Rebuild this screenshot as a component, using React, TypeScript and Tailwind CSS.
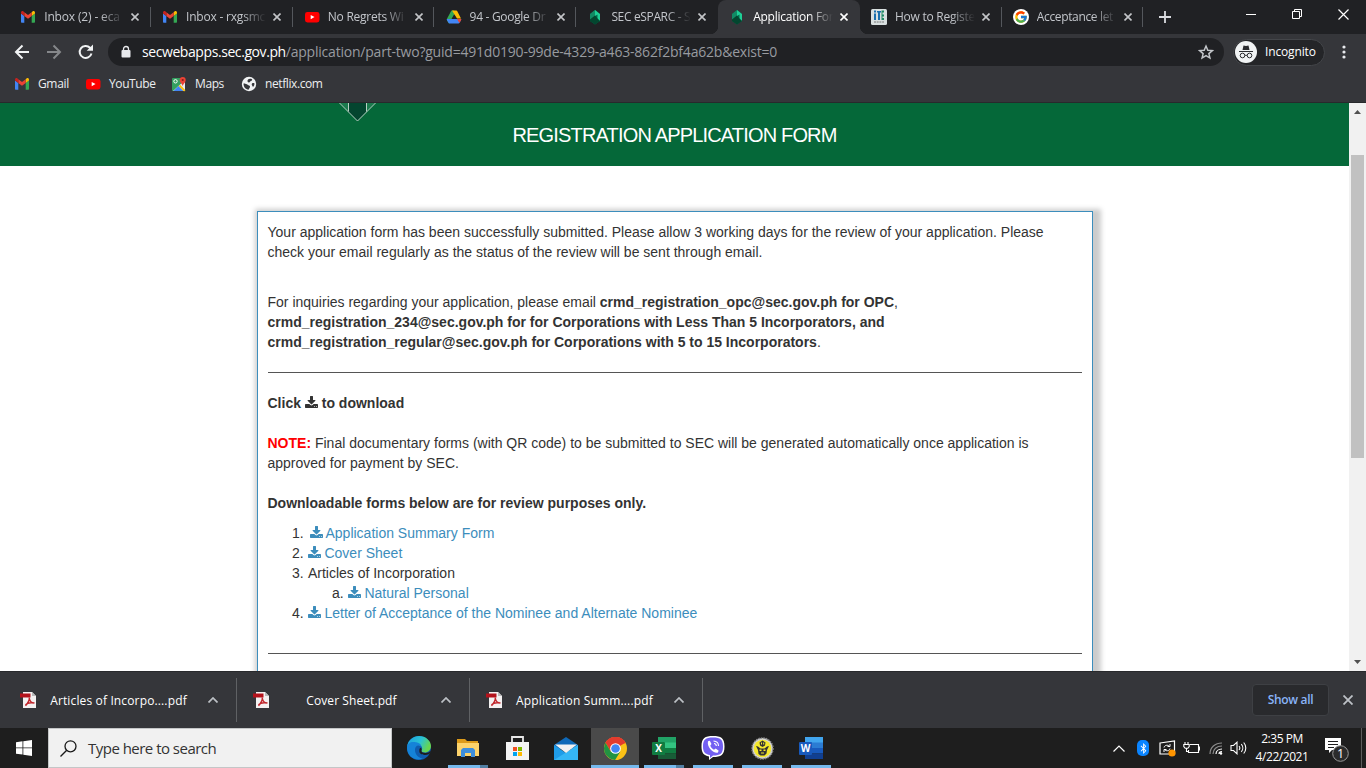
import type { ReactNode } from "react";
import { FcGoogle } from "react-icons/fc";
import { FaBluetoothB } from "react-icons/fa";

const UI = "font-['Open_Sans','Noto_Sans',sans-serif]";

function Gmail({ s = 16 }: { s?: number }) {
  return (
    <svg width={s} height={s} viewBox="0 0 16 16" className="shrink-0">
      <path d="M1 4.500v8.200c0 .6.4 1 1 1h2.300V7L1 4.500z" fill="#4285f4" />
      <path d="M15 4.500v8.200c0 .6-.4 1-1 1h-2.300V7L15 4.500z" fill="#34a853" />
      <path d="M11.700 3.200V7L15 4.500V3.600c0-1.400-1.500-2-2.500-1.200z" fill="#fbbc04" />
      <path d="M4.300 7V3.200L8 6l3.700-2.800V7L8 9.800z" fill="#ea4335" />
      <path d="M1 3.600v.9L4.300 7V3.200l-.8-.8C2.500 1.600 1 2.200 1 3.600z" fill="#c5221f" />
    </svg>
  );
}
function YouTube() {
  return (
    <svg width="16" height="16" viewBox="0 0 16 16" className="shrink-0">
      <rect x="1" y="3" width="14.500" height="10.500" rx="2.400" fill="#f00" />
      <path d="M6.700 5.900v4.400l3.800-2.200z" fill="#fff" />
    </svg>
  );
}
function Drive() {
  return (
    <svg width="16" height="16" viewBox="0 0 16 16" className="shrink-0">
      <path d="M5.500 1.500h2.600L9.500 4 5.300 11 3.300 14.500c-.4-.1-.7-.3-.9-.7L1 11.200c-.2-.5-.2-1 0-1.400L5 2.200z" fill="#34a853" />
      <path d="M6 1.500h4.200c.5 0 .9.300 1.100.7L15 9.500H11z" fill="#fbbc04" />
      <path d="M.8 10h14.400c0 .5 0 .8-.2 1.200l-1.500 2.600c-.2.400-.6.700-1.100.7H3.600c-.5 0-.9-.3-1.100-.7L1 11.200C.8 10.800.8 10.500.8 10z" fill="#4285f4" />
      <path d="M11 10h4.200c0 .5 0 .8-.2 1.200l-1.600 2.800z" fill="#ea4335" />
      <path d="M8 5.500l2.500 4.500h-5z" fill="#202124" />
    </svg>
  );
}
function Sec() {
  return (
    <svg width="16" height="16" viewBox="0 0 16 16" className="shrink-0">
      <path d="M8 1L3 5v7l5 3.500 5-3.500V5z" fill="#006b4a" />
      <path d="M8 1L3 5v6l5-4z" fill="#128a64" />
      <path d="M8 1l5 4v7l-2.500-2V5.500L8 7z" fill="#1fcf96" />
      <path d="M3 10.500L8 6.500l2.500 3 2.500 2.500-5 3.500L3 12z" fill="#03462f" />
    </svg>
  );
}
function Guide() {
  return (
    <svg width="16" height="16" viewBox="0 0 16 16" className="shrink-0">
      <rect width="16" height="16" rx="1.500" fill="#d9e0e0" />
      <path d="M3 1.500h2v2H3zM3 4.500h2V11H3zM6 2h4v1.500H9V11H7V3.500H6z" fill="#1b6fae" />
      <path d="M10.500 1.500H13v2h-1.500v2H13v2h-1.500V9H13v2h-2.500z" fill="#208b65" />
      <path d="M3 13h10" stroke="#777" strokeDasharray="2 .7" />
    </svg>
  );
}
function GoogleBadge() {
  return (
    <span className="flex size-4 shrink-0 items-center justify-center rounded-full bg-white">
      <FcGoogle size={14} />
    </span>
  );
}
function Maps() {
  return (
    <svg width="16" height="16" viewBox="0 0 16 16" className="shrink-0">
      <rect x="1" y="2" width="13" height="13" rx="1" fill="#34a060" />
      <path d="M2 15L13 5l1 1v8l-1 1z" fill="#e8eaed" />
      <path d="M2.500 15L7.500 10l5 5z" fill="#4285f4" />
      <path d="M8.500 9.500l5.300 5.300" stroke="#fbbc04" strokeWidth="1.800" />
      <circle cx="4.500" cy="5.300" r="1.700" fill="none" stroke="#fff" />
      <path d="M11.700 10.500C11.500 8 8.700 6.800 8.700 4a3 3 0 016 0c0 2.800-2.800 4-3 6.500z" fill="#ea4335" />
      <circle cx="11.700" cy="4" r="1.100" fill="#8c1d18" />
    </svg>
  );
}
function Globe() {
  return (
    <svg width="16" height="16" viewBox="0 0 16 16" className="shrink-0">
      <circle cx="8" cy="8" r="7.200" fill="#f1f3f4" />
      <path d="M2.500 7.500c2 0 3 .5 4.500 1.500s2 .5 2 1.700-1 1-1 2.800c-3 .3-5.500-2-5.500-6zM7 3.500c1-.7 2.500-1 4-.2.500.6-.2 1.500-1 1.700C9 5.200 9.200 6.500 8 6.500 6.500 6.500 6 4.500 7 3.500zM11 7.500c.8-.6 1.800-.5 2.500 0 0 1.500-.6 2.800-1.500 3.500-.3-1.200-2-2.200-1-3.500z" fill="#35363a" />
    </svg>
  );
}
function X({ s = 8, w = 1.6, c = "#c3c5c8" }: { s?: number; w?: number; c?: string }) {
  return (
    <svg width={s} height={s} viewBox={`0 0 ${s} ${s}`} className="shrink-0">
      <path d={`M.5.5L${s - 0.5} ${s - 0.5}M${s - 0.5}.5L.5 ${s - 0.5}`} stroke={c} strokeWidth={w} />
    </svg>
  );
}

const tabs: { icon: ReactNode; title: string; sep: boolean; active?: boolean; track: string }[] = [
  { icon: <Gmail />, title: "Inbox (2) - eca", sep: true, track: "tracking-[-0.15px]" },
  { icon: <Gmail />, title: "Inbox - rxgsmc", sep: true, track: "tracking-[-0.2px]" },
  { icon: <YouTube />, title: "No Regrets Wi", sep: true, track: "tracking-[-0.25px]" },
  { icon: <Drive />, title: "94 - Google Dr", sep: true, track: "tracking-[-0.3px]" },
  { icon: <Sec />, title: "SEC eSPARC - S", sep: false, track: "tracking-[-0.35px]" },
  { icon: <Sec />, title: "Application For", sep: false, active: true, track: "tracking-[-0.25px]" },
  { icon: <Guide />, title: "How to Registe", sep: true, track: "tracking-[-0.25px]" },
  { icon: <GoogleBadge />, title: "Acceptance let", sep: true, track: "tracking-[-0.35px]" },
];

function TabStrip() {
  return (
    <div className="flex h-[34px] bg-[#202124] pl-[9px]">
      {tabs.map((t) => (
        <div
          key={t.title}
          className={`relative flex w-[141.8px] shrink-0 items-center pl-[11.2px] ${t.active ? "rounded-t-lg bg-[#35363a]" : ""}`}
        >
          {t.active && (
            <>
              <span className="absolute bottom-0 -left-2 size-2 bg-[radial-gradient(circle_at_0_0,#202124_8px,#35363a_8.5px)]" />
              <span className="absolute -right-2 bottom-0 size-2 bg-[radial-gradient(circle_at_100%_0,#202124_8px,#35363a_8.5px)]" />
            </>
          )}
          {t.icon}
          <span
            className={`ml-2 w-[80px] overflow-hidden text-[12px] whitespace-nowrap [mask-image:linear-gradient(to_right,#000_70%,transparent)] ${t.track} ${t.active ? "text-white" : "text-[#c3c6cb]"}`}
          >
            {t.title}
          </span>
          <span className="ml-[7px] flex">
            <X c={t.active ? "#fff" : "#c3c5c8"} />
          </span>
          {t.sep && <span className="ml-auto h-5 w-px bg-[#54575c]" />}
        </div>
      ))}
      <div className="flex w-11 items-center justify-center">
        <svg width="12" height="12" viewBox="0 0 12 12">
          <path d="M6 0v12M0 6h12" stroke="#dadce0" strokeWidth="1.800" />
        </svg>
      </div>
      <div className="ml-auto flex h-[28px] text-white">
        <span className="flex w-[46px] items-center justify-center">
          <svg width="10" height="10"><path d="M0 5.500h10" stroke="#fff" /></svg>
        </span>
        <span className="flex w-[46px] items-center justify-center">
          <svg width="11" height="11" fill="none" stroke="#fff">
            <path d="M.5 2.500h7v7h-7zM2.500 2V.5h7v7H8" />
          </svg>
        </span>
        <span className="flex w-[46px] items-center justify-center">
          <X s={11} w={1.2} c="#fff" />
        </span>
      </div>
    </div>
  );
}

function Toolbar() {
  return (
    <div className="flex h-[34px] items-center bg-[#35363a] pt-1 pb-0.5 pl-3.5">
      <svg width="16" height="16" viewBox="0 0 16 16" fill="none" stroke="#f1f3f4" strokeWidth="2">
        <path d="M15 8H2.500M8.500 1.500L2 8l6.500 6.500" />
      </svg>
      <svg width="16" height="16" viewBox="0 0 16 16" fill="none" stroke="#85878a" strokeWidth="2" className="ml-4">
        <path d="M1 8h12.500M7.500 1.500L14 8l-6.500 6.500" />
      </svg>
      <svg width="16" height="16" viewBox="0 0 16 16" fill="none" stroke="#f1f3f4" strokeWidth="2" className="ml-4">
        <path d="M13.500 9.500A6 6 0 1112 3.700L13.500 5.300" />
        <path d="M15 .5v6.300H8.700z" fill="#f1f3f4" stroke="none" />
      </svg>
      <div className="ml-3.5 flex h-7 w-[1116px] items-center rounded-full bg-[#202124] pr-2.5 pl-[13px]">
        <svg width="10" height="14" viewBox="0 0 10 14">
          <rect x=".5" y="5" width="9" height="7.500" rx="1" fill="#e8eaed" />
          <path d="M2.500 5.500V4a2.500 2.500 0 015 0v1.500" fill="none" stroke="#e8eaed" strokeWidth="1.300" />
        </svg>
        <span className="ml-[11px] pb-0.5 text-[14px] tracking-[-0.21px] whitespace-nowrap text-[#989ba0]">
          <span className="tracking-[-0.42px] text-white">secwebapps.sec.gov.ph</span>
          /application/part-two?guid=491d0190-99de-4329-a463-862f2bf4a62b&amp;exist=0
        </span>
        <svg width="16" height="16" viewBox="0 0 24 24" className="ml-auto" fill="none" stroke="#c4c7cb" strokeWidth="2.200">
          <path d="M12 3l2.700 6.300 6.800.6-5.200 4.500 1.600 6.700L12 17.500l-5.900 3.600 1.600-6.700L2.500 9.900l6.800-.6z" />
        </svg>
      </div>
      <div className="ml-[9px] flex h-[27px] w-[92px] items-center rounded-full border border-[#44464a] bg-[#242528] pl-px">
        <svg width="22" height="22" viewBox="0 0 22 22">
          <circle cx="11" cy="11" r="11" fill="#f1f3f4" />
          <path d="M7.500 9l1-4.500 2.500.6 2.500-.6 1 4.500zM4 10h14v1H4z" fill="#2b2c2f" />
          <circle cx="7.500" cy="14.500" r="2.300" fill="none" stroke="#2b2c2f" />
          <circle cx="14.500" cy="14.500" r="2.300" fill="none" stroke="#2b2c2f" />
          <path d="M9.800 14.300h2.400" stroke="#2b2c2f" />
        </svg>
        <span className="ml-[8px] text-[12px] tracking-[-0.15px] text-white">Incognito</span>
      </div>
      <svg width="4" height="14" viewBox="0 0 4 14" fill="#e8eaed" className="ml-[17px]">
        <circle cx="2" cy="2" r="1.600" /><circle cx="2" cy="7" r="1.600" /><circle cx="2" cy="12" r="1.600" />
      </svg>
    </div>
  );
}

function Bookmarks() {
  return (
    <div className="flex h-[35px] items-center border-b border-[#28292c] bg-[#35363a] pb-[2px] pl-3.5 text-[12px] text-[#eceef0]">
      <Gmail /><span className="ml-2 w-12 tracking-[-0.35px]">Gmail</span>
      <span className="-ml-px flex"><YouTube /></span><span className="ml-2 w-[62px] tracking-[-0.4px]">YouTube</span>
      <Maps /><span className="ml-2 w-[46px] tracking-[-0.4px]">Maps</span>
      <Globe /><span className="ml-2 tracking-[-0.4px]">netflix.com</span>
    </div>
  );
}

function DownloadIcon() {
  return (
    <svg width="13" height="12" viewBox="64 0 1664 1536" fill="currentColor" className="inline-block align-[0px]">
      <path d="M1344 1344q0-26-19-45t-45-19-45 19-19 45 19 45 45 19 45-19 19-45zm256 0q0-26-19-45t-45-19-45 19-19 45 19 45 45 19 45-19 19-45zm128-224v320q0 40-28 68t-68 28h-1472q-40 0-68-28t-28-68v-320q0-40 28-68t68-28h465l135 136q58 56 136 56t136-56l136-136h464q40 0 68 28t28 68zm-325-569q17 41-14 70l-448 448q-18 19-45 19t-45-19l-448-448q-31-29-14-70 17-39 59-39h256v-448q0-26 19-45t45-19h256q26 0 45 19t19 45v448h256q42 0 59 39z" />
    </svg>
  );
}

function Page() {
  return (
    <div className="flex h-[568px] bg-white font-['Liberation_Sans',Arial,sans-serif]">
      <main className="min-w-0 flex-1 overflow-hidden">
        <header className="relative flex h-[63px] items-center justify-center bg-[#056839] text-[20px] text-white">
          <svg width="38" height="19" viewBox="0 0 38 19" className="absolute top-0 left-[338px]" stroke="#b9cfc4">
            <path d="M2 0h8v8zM28 0h9l-9 9z" fill="#1b7a4d" stroke="none" />
            <path d="M10 0h18v9l-8.500 9L10 8.500z" fill="#04452f" stroke="none" />
            <path d="M1.500 0l18 18L37.500 0M10.500 0v8.500M28.500 0v8.500" fill="none" />
          </svg>
          <h1 className="pt-px tracking-[-0.83px]">REGISTRATION APPLICATION FORM</h1>
        </header>
        <section className="mt-[45px] ml-[257px] h-[620px] w-[836px] border border-[#3c8dbc] p-2.5 text-[14px] leading-5 whitespace-nowrap text-[#333] shadow-[3px_3px_5px_5px_#ccc]">
          <p className="-ml-[0.5px]">
            Your application form has been successfully submitted. Please allow 3 working days for the review of your application. Please
            <br />check your email regularly as the status of the review will be sent through email.
          </p>
          <p className="mt-[30px] -ml-[0.5px]">
            For inquiries regarding your application, please email <b>crmd_registration_opc@sec.gov.ph for OPC</b>,
            <br /><b>crmd_registration_234@sec.gov.ph for for Corporations with Less Than 5 Incorporators, and</b>
            <br /><b>crmd_registration_regular@sec.gov.ph for Corporations with 5 to 15 Incorporators</b>.
          </p>
          <hr className="mt-5 border-[#555]" />
          <p className="mt-5 -ml-[0.5px] font-bold">Click <DownloadIcon /> to download</p>
          <p className="mt-5 -ml-[0.5px]">
            <b className="text-[#f00]">NOTE:</b> Final documentary forms (with QR code) to be submitted to SEC will be generated automatically once application is
            <br />approved for payment by SEC.
          </p>
          <p className="mt-5 -ml-[0.5px] font-bold">Downloadable forms below are for review purposes only.</p>
          <ol className="mt-2.5 pl-6 text-[#333]">
            <li>1. <a className="ml-[2px] text-[#3c8dbc]"><DownloadIcon /> <span className="-ml-px">Application Summary Form</span></a></li>
            <li>2. <a className="text-[#3c8dbc]"><DownloadIcon /> Cover Sheet</a></li>
            <li>3. <span className="ml-[0.3px]">Articles of Incorporation</span></li>
            <li className="pl-10">a. <a className="text-[#3c8dbc]"><DownloadIcon /> Natural Personal</a></li>
            <li>4. <a className="text-[#3c8dbc]"><DownloadIcon /> Letter of Acceptance of the Nominee and Alternate Nominee</a></li>
          </ol>
          <hr className="mt-[30px] border-[#555]" />
        </section>
      </main>
      <div className="flex w-[17px] flex-col items-center bg-[#f1f1f1]">
        <svg width="7" height="4" className="mt-[7px]"><path d="M0 4L3.500 0 7 4z" fill="#505050" /></svg>
        <div className="mt-[41px] h-[303px] w-[13px] bg-[#c1c1c1]" />
        <svg width="7" height="4" className="mt-auto mb-[7px]"><path d="M0 0h7L3.500 4z" fill="#505050" /></svg>
      </div>
    </div>
  );
}

function Pdf() {
  return (
    <svg width="16" height="16" viewBox="0 0 16 16" className="shrink-0">
      <path d="M3 0h9l4 4v12H3z" fill="#f4f1f1" />
      <path d="M12 0v4h4z" fill="#b9b9b9" />
      <path d="M0 1.500h10.500v4H0z" fill="#b4121b" />
      <path d="M9.300 5.500c.4 3-1.300 5.500-3.800 8.200M9.300 6c.3 3 2 4.800 5 5M5.500 13c1.500-2 5-2.700 9-2" fill="none" stroke="#c1272d" strokeWidth="1.400" />
    </svg>
  );
}
function Shelf() {
  const files = [
    ["Articles of Incorpo....pdf", "tracking-[0.14px]"],
    ["Cover Sheet.pdf", "tracking-[0.08px]"],
    ["Application Summ....pdf", "tracking-[0.16px]"],
  ];
  return (
    <div className="flex h-[57px] items-center border-t border-[#28292c] bg-[#35363a] pl-1 text-[12px] text-white">
      {files.map(([f, track]) => (
        <div key={f} className="flex h-11 w-[233px] items-center border-r border-[#5f6164] pl-4">
          <Pdf />
          <span className={`ml-[11px] flex w-[143px] justify-center pt-0.5 whitespace-nowrap ${track}`}>{f}</span>
          <svg width="10" height="6" className="ml-[18px]" fill="none" stroke="#bdc1c6" strokeWidth="1.700"><path d="M.5 5.500L5 1l4.500 4.500" /></svg>
        </div>
      ))}
      <span className="mr-[14px] ml-auto flex h-8 w-[77px] items-center justify-center rounded border border-[#3e4044] bg-[#292a2d] font-semibold tracking-[-0.3px] text-[#8ab4f8]">Show all</span>
      <span className="mr-[13px] flex"><X s={10} w={1.8} c="#bdc1c6" /></span>
    </div>
  );
}

function Edge() {
  return (
    <svg width="24" height="24" viewBox="0 0 24 24">
      <defs>
        <linearGradient id="e1" x1="0" y1="0" x2="1" y2=".4"><stop stopColor="#1b9de2" /><stop offset=".6" stopColor="#2bc3d2" /><stop offset="1" stopColor="#67d64f" /></linearGradient>
      </defs>
      <circle cx="12" cy="12" r="12" fill="#0f5cae" />
      <path d="M0 11C1 4 6 0 12 0c7 0 12 5 12 10 0 4-3 6.500-6 6.500-2.500 0-4-1-3.500-2 1.500-2 .5-5.500-3.500-5.500-5 0-11-1-11 2z" fill="url(#e1)" />
      <path d="M0 12C0 7 4 5.500 7.500 6c4 .5 7 2 7 5-3-3-6.500-1.500-6.500 3 0 5 4 8 8 8.500C8 26 0 20 0 12z" fill="#1583d8" />
      <path d="M14.500 14.500c-.5 1 1 2.500 4 2.500 2 0 4-.8 5.500-2.500-.5 1.500-1 2.500-1.700 3.500-5 2-10 .7-10-3 0-2 .5-2.600 1.200-3.200 1 .3 1.500 1.500 1 2.700z" fill="#1e1e1e" />
    </svg>
  );
}
function Explorer() {
  return (
    <svg width="22" height="20" viewBox="0 0 22 20">
      <path d="M0 1h8l2 2h11v4H0z" fill="#dd9b1a" />
      <path d="M0 5h22v13H0z" fill="#fdd36b" />
      <path d="M4 19v-7l2-2h10l2 2v7h-4v-4H8v4z" fill="#3e8edb" />
    </svg>
  );
}
function Store() {
  return (
    <svg width="23" height="24" viewBox="0 0 23 24">
      <path d="M6 8V1h11v7" fill="none" stroke="#e8e8e8" strokeWidth="1.800" />
      <path d="M0 6h23v18H0z" fill="#f4f4f4" />
      <path d="M7 11h4v4H7z" fill="#f25022" /><path d="M12 11h4v4h-4z" fill="#7fba00" />
      <path d="M7 16h4v4H7z" fill="#00a4ef" /><path d="M12 16h4v4h-4z" fill="#ffb900" />
    </svg>
  );
}
function Mail() {
  return (
    <svg width="24" height="23" viewBox="0 0 24 23">
      <path d="M0 8l12-8 12 8v4H0z" fill="#0f69b8" />
      <path d="M0 8l12 8 12-8v15H0z" fill="#1f9ce8" />
      <path d="M0 23L24 8v15z" fill="#35b6f5" />
      <path d="M1 7.500h22L12 16z" fill="#f2f2f2" />
    </svg>
  );
}
function Chrome() {
  return (
    <svg width="23" height="23" viewBox="0 0 24 24">
      <circle cx="12" cy="12" r="12" fill="#fbc116" />
      <path d="M12 12L1.600 6A12 12 0 0122.400 6z" fill="#e33b2e" />
      <path d="M12 6.500h10.700A12 12 0 001.600 6L7 15z" fill="#e33b2e" />
      <path d="M1.600 6a12 12 0 0010 18L17 15H7z" fill="#229342" />
      <circle cx="12" cy="12" r="5.600" fill="#fff" />
      <circle cx="12" cy="12" r="4.500" fill="#4285f4" />
    </svg>
  );
}
function Office({ l, a, b, c, d }: { l: string; a: string; b: string; c: string; d: string }) {
  return (
    <svg width="24" height="22" viewBox="0 0 24 22">
      <path d="M6 0h18v6H6z" fill={a} /><path d="M6 5.500h18V11H6z" fill={b} />
      <path d="M6 11h18v5.500H6z" fill={c} /><path d="M6 16.500h18V22H6z" fill={d} />
      <rect y="5" width="13" height="13" rx="1" fill={c} />
      <text x="6.500" y="15" textAnchor="middle" fontSize="10" fontWeight="700" fill="#fff">{l}</text>
    </svg>
  );
}
function Viber() {
  return (
    <svg width="24" height="24" viewBox="0 0 24 24">
      <path d="M12 0c8 0 11.500 2 11.500 10.500S20 21 12 21l-4 3v-3.500C2.500 19.500.5 16.500.5 10.500.5 2 4 0 12 0z" fill="#fff" />
      <path d="M12 1.500c7.500 0 10 2 10 9s-2.500 9-10 9l-3 2.500v-3C4 18.200 2 16 2 10.500c0-7 2.500-9 10-9z" fill="#7360f2" />
      <path d="M7 5.200l1.800-.5L10.500 8l-1.200 1.500c.5 2 2 3.500 3.700 4.200l1.700-1.200 3 2.300-1 2C12 17.600 5.600 10.500 7 5.200z" fill="#fff" />
      <path d="M12.500 5c3 .2 5 2 5 5M13 7.500c1.500.2 2.300 1 2.300 2.500" fill="none" stroke="#fff" strokeWidth="1.100" />
    </svg>
  );
}
function Seal() {
  return (
    <svg width="23" height="23" viewBox="0 0 23 23">
      <circle cx="11.500" cy="11.500" r="10.500" fill="#d4d4d4" stroke="#888" strokeWidth="1.500" strokeDasharray="1.500 1" />
      <circle cx="11.500" cy="11.500" r="8.800" fill="#f5e82c" />
      <path d="M8.500 5.500l3-2 3 2-.5 3-2.500 1.500L9 8.500z" fill="#333" />
      <path d="M5 9l2 .5 2.500 2h4l2.500-2 2-.5-2 4-.5 3.500-2 2h-4L7.500 17 7 13z" fill="#333" />
      <path d="M10 5.500h1v2h-1zM12.200 5.500h1v2h-1zM8.500 12.500h2V14h-2zM12.500 12.500h2V14h-2zM10 15.500h3v1h-3z" fill="#f5e82c" />
    </svg>
  );
}

const apps: { icon: ReactNode; bar: "none" | "full" | "one" | "two" }[] = [
  { icon: <Edge />, bar: "none" },
  { icon: <Explorer />, bar: "two" },
  { icon: <Store />, bar: "none" },
  { icon: <Mail />, bar: "none" },
  { icon: <Chrome />, bar: "full" },
  { icon: <Office l="X" a="#21a366" b="#33c481" c="#107c41" d="#185c37" />, bar: "two" },
  { icon: <Viber />, bar: "one" },
  { icon: <Seal />, bar: "one" },
  { icon: <Office l="W" a="#41a5ee" b="#2b7cd3" c="#185abd" d="#103f91" />, bar: "one" },
];

function Taskbar() {
  return (
    <div className="flex h-10 bg-[#1e1e1e]">
      <div className="flex w-12 items-center justify-center">
        <svg width="16" height="16" viewBox="0 0 16 16" fill="#fff">
          <path d="M0 2.200L6.500 1.300v6.200H0zM7.300 1.200L16 0v7.500H7.300zM0 8.300h6.500v6.300L0 13.700zM7.300 8.300H16V16l-8.700-1.200z" />
        </svg>
      </div>
      <div className="flex w-[344px] items-center border border-[#c4c6c7] bg-[#f1f1f1] pl-[11px]">
        <svg width="17" height="17" viewBox="0 0 17 17" fill="none" stroke="#1a1a1a" strokeWidth="1.300">
          <circle cx="10.500" cy="6.300" r="5.500" /><path d="M6.700 10.300L.5 16.500" />
        </svg>
        <span className="ml-[11px] text-[15px] tracking-[-0.52px] text-[#333]">Type here to search</span>
      </div>
      <div className="ml-[3px] flex gap-px">
        {apps.map((a, i) => (
          <div key={i} className={`flex w-12 flex-col ${a.bar === "full" ? "bg-[#4a4a4a]" : ""}`}>
            <span className="flex h-[37px] items-center justify-center pt-[3px]">{a.icon}</span>
            {a.bar === "full" && <span className="h-[3px] bg-[#76b9ed]" />}
            {a.bar === "one" && <span className="mx-1 h-[3px] bg-[#76b9ed]" />}
            {a.bar === "two" && <span className="mx-1 flex h-[3px] bg-[#76b9ed]"><span className="ml-auto w-2 bg-[#527fa3]" /></span>}
          </div>
        ))}
      </div>
      <div className="ml-auto flex items-center">
        <svg width="12" height="7" fill="none" stroke="#fff" strokeWidth="1.200"><path d="M.5 6.500L6 1l5.500 5.500" /></svg>
        <span className="ml-3 flex h-4 w-3 items-center justify-center rounded-[5px] bg-[#0a84ff] text-white"><FaBluetoothB size={11} /></span>
        <svg width="17" height="17" viewBox="0 0 17 17" className="ml-2.5" fill="none" stroke="#fff" strokeWidth="1.200">
          <path d="M1 3l14.500-2v13H1z" />
          <path d="M5 7.500c.5-2.500 4-3 5.500-1M11 4v2.500H8.500M11 8.500c-.5 2.500-4 3-5.500 1M5 12V9.500h2.500" strokeWidth="1" />
          <circle cx="13" cy="13" r="3.600" fill="#ff9500" stroke="none" />
        </svg>
        <svg width="17" height="12" viewBox="0 0 17 12" className="ml-[7px]" fill="none" stroke="#fff" strokeWidth="1.100">
          <path d="M7 2.500h8.500v8H5.500V8M15.500 5h1v3h-1M2 0v2.500M5 0v2.500M.8 2.500h5.400v2L4.800 6.300H2.200L.8 4.500zM3.500 6.500v3H5" />
        </svg>
        <svg width="14" height="14" viewBox="0 0 14 14" className="ml-[9px]" fill="none" stroke="#8b8b8b" strokeWidth="1.200">
          <path d="M1 13C1 6.500 6 2 13 2M4 13c0-4.500 3.500-8 9-8" />
          <path d="M7 13c0-3 2.500-5 6-5M10 13c0-1.500 1-2.300 3-2.300" stroke="#fff" />
          <circle cx="12" cy="12.500" r="1.200" fill="#fff" stroke="none" />
        </svg>
        <svg width="17" height="14" viewBox="0 0 17 14" className="ml-[7px]" fill="none" stroke="#fff" strokeWidth="1.100">
          <path d="M1 4.500h2.500L7 1.200v11.600L3.500 9.500H1zM9 5c1 1.200 1 2.800 0 4M11.300 3.200c2 2.200 2 5.400 0 7.600M13.700 1.500c2.800 3.200 2.800 7.800 0 11" />
        </svg>
        <div className="ml-[5px] flex w-[60px] flex-col items-center text-[12px] leading-[18px] tracking-[-0.45px] whitespace-nowrap text-white">
          <span>2:35 PM</span><span>4/22/2021</span>
        </div>
        <svg width="26" height="28" viewBox="0 0 26 28" className="mt-1 ml-[12px]">
          <path d="M1 2h16v12H8l-3 3v-3H1z" fill="#fff" />
          <path d="M4 5.500h10M4 8.500h10M4 11.500h6" stroke="#1e1e1e" />
          <circle cx="16.500" cy="17.500" r="7.800" fill="#2b2b2b" stroke="#999" />
          <text x="16.500" y="22" textAnchor="middle" fontSize="12.500" fill="#fff">1</text>
        </svg>
        <span className="mr-1 ml-[11px] h-10 w-px bg-[#5c5c5c]" />
      </div>
    </div>
  );
}

export default function App() {
  return (
    <div className={`h-[768px] w-[1366px] overflow-hidden ${UI}`}>
      <TabStrip />
      <Toolbar />
      <Bookmarks />
      <Page />
      <Shelf />
      <Taskbar />
    </div>
  );
}
